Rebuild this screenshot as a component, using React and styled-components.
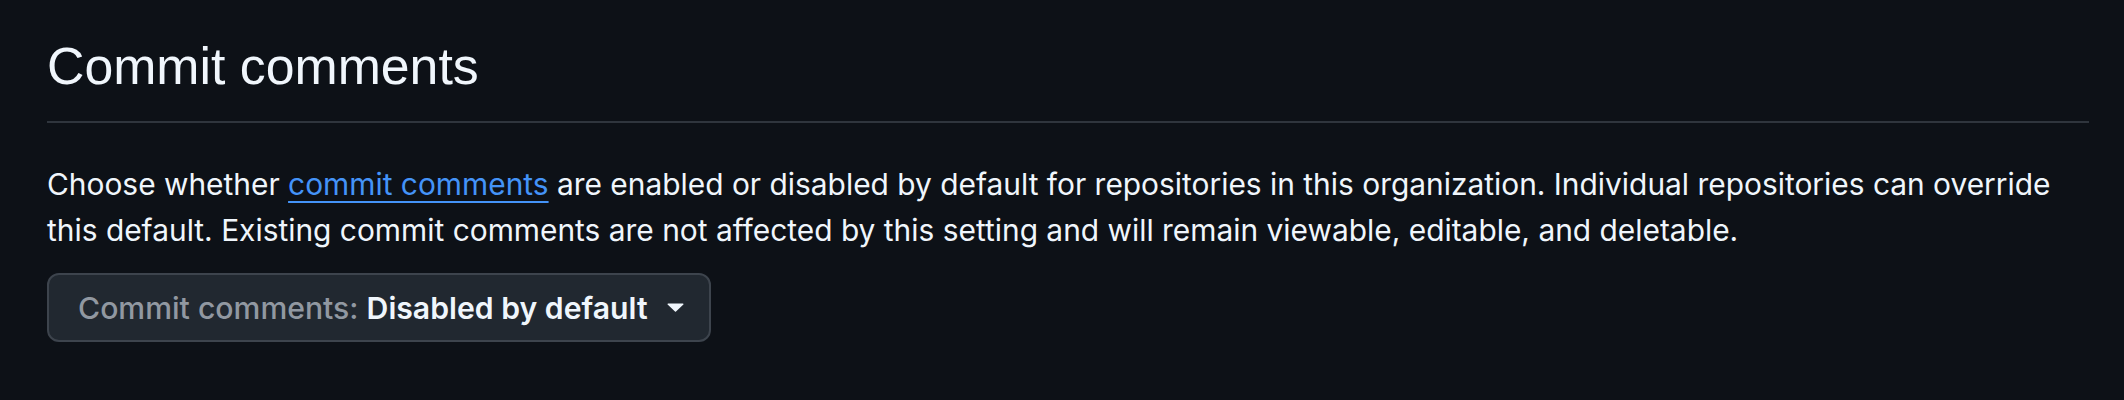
import React from 'react';
import styled, { createGlobalStyle } from 'styled-components';

const GlobalStyle = createGlobalStyle`
  html, body {
    margin: 0;
    padding: 0;
    background: #0d1117;
  }
  body {
    font-family: Inter, "Noto Sans", sans-serif;
    color: #f0f6fc;
  }
`;

const Page = styled.div`
  width: 2124px;
  height: 400px;
  box-sizing: border-box;
  padding: 36px 35px 0 47px;
  background: #0d1117;
`;

const Subhead = styled.div`
  padding-bottom: 25px;
  border-bottom: 2px solid #2f353d;
`;

const Heading = styled.h2`
  margin: 0;
  font-family: "Liberation Sans", Arial, sans-serif;
  font-size: 51.8px;
  font-weight: 400;
  line-height: 60px;
  color: #f0f6fc;
`;

const Description = styled.p`
  margin: 38px 0 20px;
  font-size: 29.9px;
  line-height: 46px;
  color: #f0f6fc;
`;

const Link = styled.a`
  color: #4493f8;
  text-decoration: underline;
  text-decoration-thickness: 2px;
  text-underline-offset: 6px;
`;

const SelectButton = styled.button`
  display: inline-flex;
  align-items: center;
  gap: 19px;
  height: 69px;
  box-sizing: border-box;
  padding: 0 25px 0 29px;
  background: #212830;
  border: 2px solid #3d444d;
  border-radius: 12px;
  font-family: Inter, "Noto Sans", sans-serif;
  font-size: 30.2px;
  cursor: pointer;
`;

const Label = styled.span`
  color: #9198a1;
  font-weight: 500;
`;

const Value = styled.span`
  color: #f0f6fc;
  font-weight: 600;
`;

const Caret = () => (
  <svg width="17" height="9" viewBox="0 0 17 9" aria-hidden="true">
    <path d="M1 0.5 H16 a0.6 0.6 0 0 1 0.4 1 L9 8.4 a0.7 0.7 0 0 1 -1 0 L0.6 1.5 A0.6 0.6 0 0 1 1 0.5 Z" fill="#f0f6fc" />
  </svg>
);

export default function App() {
  return (
    <Page>
      <GlobalStyle />
      <Subhead>
        <Heading>Commit comments</Heading>
      </Subhead>
      <Description>
        Choose whether <Link href="#">commit comments</Link> are enabled or disabled by default for repositories in this organization. Individual repositories can override this default. Existing commit comments are not affected by this setting and will remain viewable, editable, and deletable.
      </Description>
      <SelectButton type="button">
        <span>
          <Label>Commit comments: </Label>
          <Value>Disabled by default</Value>
        </span>
        <Caret />
      </SelectButton>
    </Page>
  );
}
